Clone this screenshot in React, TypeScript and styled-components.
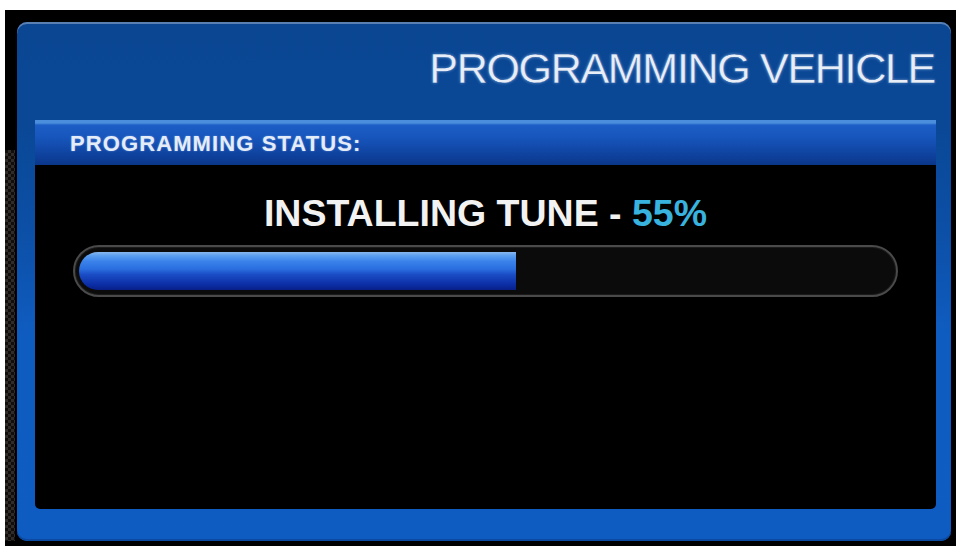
import styled, { createGlobalStyle } from 'styled-components'

const GlobalStyle = createGlobalStyle`
  html, body {
    margin: 0;
    padding: 0;
    background: #ffffff;
  }
  body {
    font-family: "Liberation Sans", Arial, sans-serif;
  }
`

const Page = styled.div`
  width: 956px;
  height: 546px;
  box-sizing: border-box;
  padding: 10px 0 0 5px;
  background: #ffffff;
`

// black bezel around the screen
const Bezel = styled.div`
  height: 100%;
  box-sizing: border-box;
  padding: 12px 5px 5px 0;
  background: #000;
  display: flex;
`

// carbon-fibre trim peeking out on the left
const CarbonStrip = styled.div`
  width: 10px;
  margin: 128px 2px 0 0;
  background: repeating-conic-gradient(#3a342e 0 25%, #141210 0 50%) 0 0 / 6px 6px;
  opacity: 0.85;
`

const Panel = styled.div`
  flex: 1;
  display: flex;
  flex-direction: column;
  border-radius: 10px;
  padding: 0 15px 32px 18px;
  background: linear-gradient(
    180deg,
    #0a4692 0%,
    #0a4896 20%,
    #0c4fa6 40%,
    #0f5cc0 60%,
    #0e5cc2 100%
  );
  box-shadow: inset 0 2px 0 #5a7fb2, inset 0 -2px 0 #0b4aa0;
`

const TitleBar = styled.div`
  height: 98px;
  display: flex;
  justify-content: flex-end;
  align-items: flex-start;
`

const Title = styled.h1`
  margin: 22px 1px 0 0;
  font-family: "Liberation Sans", Arial, sans-serif;
  font-weight: 400;
  font-size: 43px;
  letter-spacing: -1.3px;
  color: #e8eef8;
  text-shadow: 0 0 3px rgba(160, 200, 255, 0.6);
  -webkit-text-stroke: 0.3px #0a4692;
`

const SectionHeader = styled.div`
  height: 45px;
  display: flex;
  align-items: center;
  padding-left: 35px;
  background: linear-gradient(
    180deg,
    #4b8fdc 0px,
    #4b8fdc 3px,
    #1c5ec6 5px,
    #1755bb 40%,
    #0d3e98 85%,
    #0a3688 100%
  );
`

const SectionLabel = styled.span`
  margin-top: 3px;
  font-weight: 700;
  font-size: 22px;
  letter-spacing: 1.1px;
  color: #e4ecf8;
  text-shadow: 0 0 2px rgba(180, 210, 255, 0.5);
`

const Content = styled.div`
  flex: 1;
  background: #000;
  border-radius: 0 0 5px 5px;
  display: flex;
  flex-direction: column;
  align-items: center;
  padding: 27px 38px 0;
`

const StatusLine = styled.div`
  font-weight: 700;
  font-size: 37.5px;
  color: #f2f2f2;
  line-height: 43px;
`

const Percent = styled.span`
  color: #38b2df;
`

const Track = styled.div`
  align-self: stretch;
  margin-top: 10px;
  height: 52px;
  box-sizing: border-box;
  border-radius: 26px;
  border: 2px solid #4a4a4a;
  background: #0b0b0b;
  padding: 5px 22px 5px 4px;
  box-shadow: inset 0 0 0 1px #1a1a1a;
`

const Fill = styled.div`
  height: 100%;
  border-radius: 20px 0 0 20px;
  background: linear-gradient(
    180deg,
    #8ab8f0 0%,
    #5a9ef0 10%,
    #3a82ea 25%,
    #2a6ee0 45%,
    #1a4cc4 60%,
    #0c2ea6 85%,
    #081f88 100%
  );
`

const progress = 55

export default function App() {
  return (
    <>
      <GlobalStyle />
      <Page>
        <Bezel>
          <CarbonStrip />
          <Panel>
            <TitleBar>
              <Title>PROGRAMMING VEHICLE</Title>
            </TitleBar>
            <SectionHeader>
              <SectionLabel>PROGRAMMING STATUS:</SectionLabel>
            </SectionHeader>
            <Content>
              <StatusLine>
                INSTALLING TUNE - <Percent>{progress}%</Percent>
              </StatusLine>
              <Track>
                <Fill style={{ width: `${progress}%` }} />
              </Track>
            </Content>
          </Panel>
        </Bezel>
      </Page>
    </>
  )
}
